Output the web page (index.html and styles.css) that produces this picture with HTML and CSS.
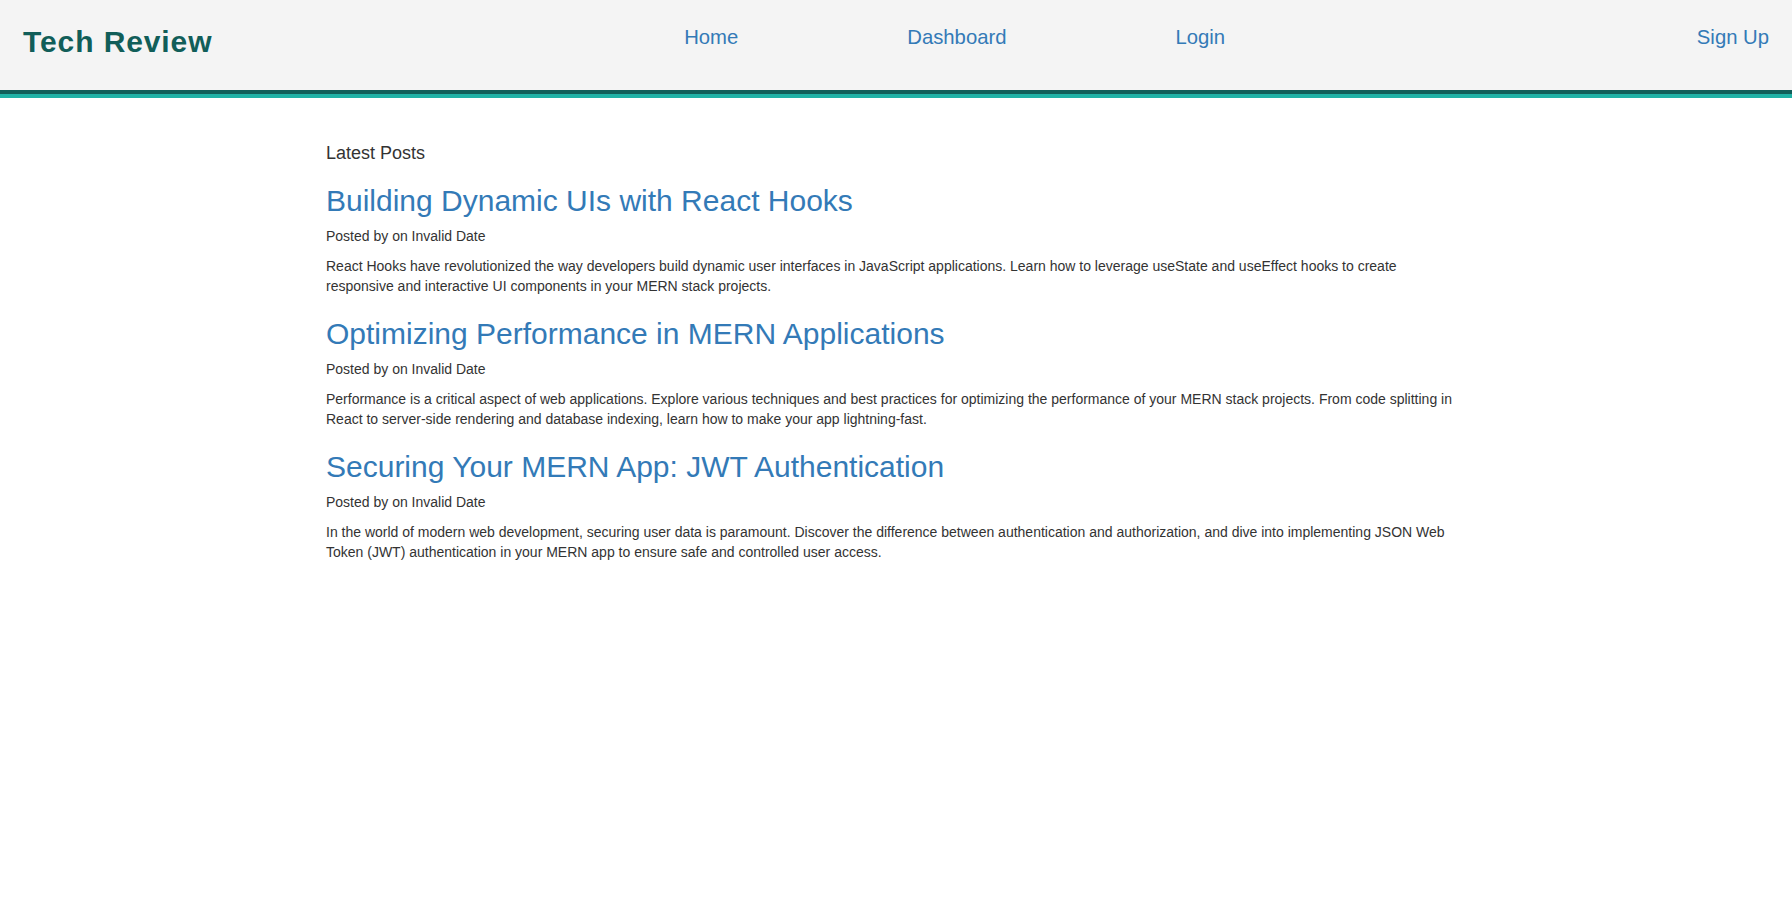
FILE: index.html
```html
<!DOCTYPE html>
<html lang="en">
<head>
<meta charset="utf-8">
<title>Tech Review</title>
<link rel="stylesheet" href="styles.css">
</head>
<body>
<header class="site-header">
  <a class="logo" href="#">Tech Review</a>
  <nav class="main-nav">
    <a href="#">Home</a>
    <a href="#">Dashboard</a>
    <a href="#">Login</a>
  </nav>
  <a class="signup" href="#">Sign Up</a>
</header>
<main class="container">
  <div class="section-title">Latest Posts</div>
  <article class="post">
    <h2 class="post-title"><a href="#">Building Dynamic UIs with React Hooks</a></h2>
    <p class="post-meta">Posted by on Invalid Date</p>
    <p class="post-body">React Hooks have revolutionized the way developers build dynamic user interfaces in JavaScript applications. Learn how to leverage useState and useEffect hooks to create responsive and interactive UI components in your MERN stack projects.</p>
  </article>
  <article class="post">
    <h2 class="post-title"><a href="#">Optimizing Performance in MERN Applications</a></h2>
    <p class="post-meta">Posted by on Invalid Date</p>
    <p class="post-body">Performance is a critical aspect of web applications. Explore various techniques and best practices for optimizing the performance of your MERN stack projects. From code splitting in React to server-side rendering and database indexing, learn how to make your app lightning-fast.</p>
  </article>
  <article class="post">
    <h2 class="post-title"><a href="#">Securing Your MERN App: JWT Authentication</a></h2>
    <p class="post-meta">Posted by on Invalid Date</p>
    <p class="post-body">In the world of modern web development, securing user data is paramount. Discover the difference between authentication and authorization, and dive into implementing JSON Web Token (JWT) authentication in your MERN app to ensure safe and controlled user access.</p>
  </article>
</main>
</body>
</html>
```

FILE: styles.css
```css
html, body {
  margin: 0;
  padding: 0;
}

body {
  font-family: "Liberation Sans", Arial, Helvetica, sans-serif;
  font-size: 14px;
  line-height: 1.42857;
  color: #333333;
  background: #ffffff;
}

a {
  color: #337ab7;
  text-decoration: none;
}

.site-header {
  display: flex;
  justify-content: space-between;
  align-items: flex-start;
  height: 94px;
  box-sizing: border-box;
  padding: 25px 23px 0 23px;
  background: #f4f4f4;
  border-bottom: 4px solid #115e59;
  box-shadow: 0 4px 0 #20b1a5;
  margin-bottom: 4px;
  line-height: normal;
}

.logo {
  font-size: 30px;
  font-weight: 700;
  letter-spacing: 0.9px;
  color: #115e59;
}

.main-nav {
  display: flex;
  gap: 169px;
  margin-top: 1px;
}

.main-nav a,
.signup {
  font-size: 20.3px;
  color: #337ab7;
}

.signup {
  margin-top: 1px;
}

.container {
  width: 1170px;
  box-sizing: border-box;
  margin: 0 auto;
  padding: 44px 15px 0;
}

.section-title {
  font-size: 18px;
  line-height: 22px;
}

.post-title {
  font-size: 30px;
  font-weight: 400;
  line-height: 1.1;
  margin: 20px 0 10px;
}

.post-meta,
.post-body {
  margin: 0 0 10px;
}
```
